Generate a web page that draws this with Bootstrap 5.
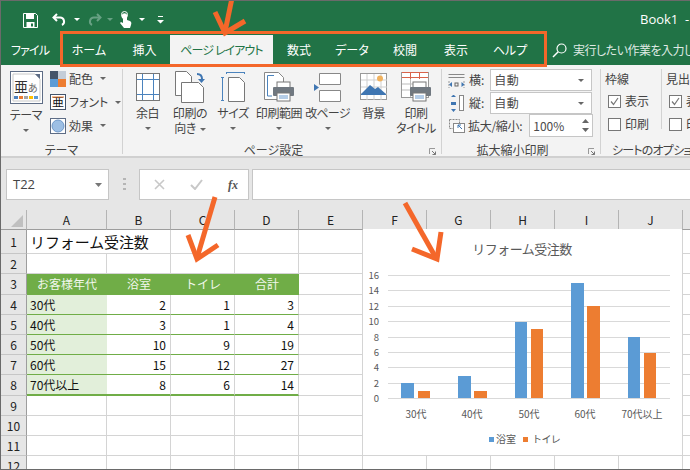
<!DOCTYPE html>
<html lang="ja">
<head>
<meta charset="utf-8">
<title>Book1 - Excel</title>
<link rel="stylesheet" href="https://cdn.jsdelivr.net/npm/bootstrap@5.3.0/dist/css/bootstrap.min.css">
<style>
html,body{margin:0;background:#fff;overflow:hidden}
body{font-family:"Noto Sans CJK JP","Liberation Sans",sans-serif;font-size:12px;color:#444}
svg{display:block;flex:none}
.app{position:relative;width:690px;height:470px;overflow:hidden;border-top:1px solid #6a6a6a;border-left:1px solid #6a6a6a;border-bottom:1px solid #6a6a6a}
.titlebar{height:34px;background:#217346;color:#fff;position:relative}
.qat{padding-left:22px;padding-top:10px}
.undo-gap{margin-left:14px}
.caret-gap{margin-left:8px}
.redo-gap{margin-left:8px}
.dim-caret-gap{margin-left:5px}
.touch-gap{margin-left:6px}
.touch-caret-gap{margin-left:7px}
.more-gap{margin-left:12px}
.doc-title{position:absolute;left:639px;top:9px;font-family:"Open Sans","Liberation Sans",sans-serif;font-size:13px;white-space:nowrap}
.tabsbar{height:30px;background:#217346;color:#fff;width:760px}
.xtab{flex:none;height:30px;font-size:12px;font-feature-settings:"palt";line-height:30px;text-align:center;white-space:nowrap}
.xtab-file{letter-spacing:-.8px}
.xtab-on{background:#f3f3f3;color:#217346;letter-spacing:-.9px}
.searchhint{flex:none;margin-left:13px;gap:6px;font-size:12px;font-feature-settings:"palt";letter-spacing:-.5px;color:#dfe9e3;white-space:nowrap}
.ribbon{height:93px;background:#f3f3f3;border-bottom:2px solid #d0d0d0}
.rgroup{position:relative;border-right:1px solid #d2d2d2;margin-top:4px;height:85px;flex:none}
.rcap{position:absolute;left:0;right:0;top:74px;text-align:center;font-size:12px;font-feature-settings:"palt";line-height:14px;white-space:nowrap}
.cap-offset{right:17px}
.launch{position:absolute;right:5px;top:79px}
.bigbtn{width:43px;flex:none;text-align:center;font-size:12px;font-feature-settings:"palt";letter-spacing:-.4px;line-height:15px;white-space:nowrap}
.btn-theme{width:50px}
.btn-w42{width:42px}
.btn-w44{width:44px}
.btn-w48{width:48px}
.btn-w49{width:49px;letter-spacing:-.7px}
.theme-icon{height:37px;padding:2px 0 0 1px}
.theme-label{margin-top:1px}
.caret-line{line-height:14px}
.bigicon{height:36px;display:flex;justify-content:center;align-items:center}
.down{width:0;height:0;border-left:3px solid transparent;border-right:3px solid transparent;border-top:3px solid #666;display:inline-block;vertical-align:middle}
.tiny{font-size:12px;font-feature-settings:"palt";line-height:16px;white-space:nowrap;gap:3px}
.srows{margin-top:-2px;margin-left:-1px}
.srow{height:23.5px}
.grp-page{width:319px;padding-left:3px}
.grp-scale{width:159px;padding-left:6px}
.grp-sheet{width:89px;border-right:0;padding-left:4px}
.grp-theme{width:122px}
.frow{height:22px}
.frow-2{margin-top:1px}
.frow-3{height:23px}
.fieldlabel{margin-left:3px;font-size:12px;white-space:nowrap}
.fieldlabel-tight{letter-spacing:-.3px}
.dropbox{background:#fff;border:1px solid #c6c6c6;height:22px;width:102px;margin-left:6px;padding:0 3px;color:#4b4b4b;font-size:12px;letter-spacing:.5px}
.spinbox{background:#fff;border:1px solid #c6c6c6;height:23px;width:64px;margin-left:7px;padding:0 3px;font-size:12px;color:#4b4b4b}
.opt-col{flex:none}
.opt-first{width:57px;border-right:1px solid #d2d2d2;height:60px}
.opt-second{padding-left:4px}
.opt-head{height:20px;line-height:20px}
.opt-row{height:23px;padding:1px 0 0 3px}
.cap-left{text-align:left;left:11px;letter-spacing:-.8px}
.tick{width:13px;height:13px;background:#fff;border:1px solid #777;flex:none}
.formula{height:52px;background:#e6e6e6;padding:11px 0 0 5px}
.fbox{height:31px;background:#fff;border:1px solid #c6c6c6}
.namebox{width:103px;padding:0 6px;font-family:"Open Sans","Liberation Sans",sans-serif;font-size:13px;color:#444}
.fdots{width:30px;height:30px}
.fxbox{width:110px;padding:0 10px 0 14px}
.fxmark{font-family:"Liberation Serif",serif;font-style:italic;font-weight:700;font-size:12px;color:#555}
.fxinput{flex:1 1 auto;margin-left:3px;border-right:0}
.sheet{border-collapse:separate;border-spacing:0;table-layout:fixed;width:698px;background:#fff;font-size:12px;color:#111}
.sheet th{background:#e6e6e6;font-weight:400;text-align:center;padding:0;color:#222;font-size:12px;line-height:14px;border-bottom:1px solid #9d9d9d;border-right:1px solid #b4b4b4}
.sheet td{padding:0 3px;border-right:1px solid #d4d4d4;border-bottom:1px solid #d4d4d4;line-height:14px;white-space:nowrap;overflow:hidden}
.sheet tbody th{border-bottom:1px solid #c6c6c6;border-right:1px solid #9d9d9d}
.c-head{width:26px}.c-a{width:80px}.c-n{width:64px}.c-end{width:16px}
.r-20{height:20px}.r-21{height:21px}.r-24{height:24px}
.sheet td.hdr{background:#70ad47;color:#f1f7ed;text-align:center;border-right:0;border-bottom-color:#70ad47}
.sheet td.lbl{background:#e2efda;border-right:0;border-bottom-color:#70ad47}
.sheet td.num{text-align:right;padding-right:4px;border-bottom-color:#70ad47}
.sheet tr.last td.lbl,.sheet tr.last td.num{border-bottom:2px solid #70ad47}
.sheet td.ttl{font-size:15px;border-right:0;overflow:visible;letter-spacing:-.1px}
.corner-mark{margin:3px 0 0 10px}
.chartbox{position:absolute;left:362px;top:228px}
.overlay{position:absolute;left:-1px;top:-1px;pointer-events:none}
</style>
</head>
<body>
<div class="app">
  <div class="titlebar">
    <div class="qat d-flex align-items-center">
      <svg width="15" height="15" viewBox="0 0 15 15"><path d="M.5.5h12l2 2v12H.5z" fill="none" stroke="#fff"/><path d="M3 1h8v5H3zM3.500 9h8v5h-8z" fill="#fff"/><rect x="8" y="10.500" width="2" height="3" fill="#217346"/></svg>
      <svg class="undo-gap" width="14" height="14" viewBox="0 0 14 14"><path d="M5 1L1.500 4.500 5 8" fill="none" stroke="#fff" stroke-width="2"/><path d="M2 4.500h6a4 4 0 0 1 2 7.500" fill="none" stroke="#fff" stroke-width="2"/></svg>
      <span class="caret-gap"><svg width="6" height="4"><path d="M0 0h6L3 3z" fill="#fff"/></svg></span>
      <svg class="redo-gap" width="14" height="14" viewBox="0 0 14 14"><path d="M9 1l3.500 3.500L9 8" fill="none" stroke="#68a184" stroke-width="2"/><path d="M12 4.500H6a4 4 0 0 0-2 7.500" fill="none" stroke="#68a184" stroke-width="2"/></svg>
      <span class="dim-caret-gap"><svg width="6" height="4"><path d="M0 0h6L3 3z" fill="#68a184"/></svg></span>
      <svg class="touch-gap" width="13" height="18" viewBox="0 0 13 18"><path d="M3 7a3 3 0 1 1 5 0l0 2 3 1q2 1 1 4l-1 3H5L1 12l1-1 2 1V5h3v5" fill="#fff"/><circle cx="5.500" cy="3.500" r="3" fill="none" stroke="#fff"/></svg>
      <span class="touch-caret-gap"><svg width="6" height="4"><path d="M0 0h6L3 3z" fill="#fff"/></svg></span>
      <svg class="more-gap" width="7" height="8" viewBox="0 0 7 8"><path d="M1 0h5v1H1zM0 4h7L3.500 7.500z" fill="#fff"/></svg>
    </div>
    <div class="doc-title">Book1 &nbsp;-</div>
  </div>

  <div class="tabsbar d-flex align-items-center">
    <div class="xtab xtab-file" style="width:58px">ファイル</div>
    <div class="xtab" style="width:60px">ホーム</div>
    <div class="xtab" style="width:51px">挿入</div>
    <div class="xtab xtab-on" style="width:103px">ページ レイアウト</div>
    <div class="xtab" style="width:52px">数式</div>
    <div class="xtab" style="width:54px">データ</div>
    <div class="xtab" style="width:52px">校閲</div>
    <div class="xtab" style="width:50px">表示</div>
    <div class="xtab" style="width:58px">ヘルプ</div>
    <div class="searchhint d-flex align-items-center">
      <svg width="15" height="15" viewBox="0 0 15 15"><circle cx="9.500" cy="5.500" r="4.500" fill="none" stroke="#fff" stroke-width="1.200"/><path d="M6.200 8.800L1 14" stroke="#fff" stroke-width="1.500"/></svg>
      <span>実行したい作業を入力してください</span>
    </div>
  </div>

  <div class="ribbon d-flex align-items-start">
    <div class="rgroup grp-theme">
      <div class="d-flex">
        <div class="bigbtn btn-theme">
          <div class="theme-icon d-flex justify-content-center">
            <svg width="33" height="33" viewBox="0 0 33 33"><rect x=".5" y=".5" width="32" height="32" fill="#fff" stroke="#5d6c85"/><path d="M3 3h22l5 5v22H3z" fill="#fff" stroke="#c8c8c8"/><path d="M25 3h5v5z" fill="#5d6c85"/><text x="4" y="21" font-size="14" fill="#333" font-family="Noto Sans CJK JP">亜</text><text x="18" y="21" font-size="10" fill="#666" font-family="Noto Sans CJK JP">あ</text><rect x="4" y="25" width="4" height="3" fill="#4f81bd"/><rect x="9" y="25" width="4" height="3" fill="#ed7d31"/><rect x="14" y="25" width="4" height="3" fill="#a5a5a5"/><rect x="19" y="25" width="4" height="3" fill="#ffc000"/><rect x="24" y="25" width="4" height="3" fill="#5b9bd5"/></svg>
          </div>
          <div class="theme-label">テーマ</div>
          <div class="caret-line"><span class="down"></span></div>
        </div>
        <div class="srows">
          <div class="d-flex align-items-center tiny srow"><svg width="16" height="16" viewBox="0 0 16 16"><rect width="8" height="8" fill="#44546a"/><rect x="8" width="8" height="8" fill="#c4cdd8"/><rect y="8" width="8" height="8" fill="#5b9bd5"/><rect x="8" y="8" width="8" height="8" fill="#ed7d31"/></svg><span>配色</span><span class="down ms-1"></span></div>
          <div class="d-flex align-items-center tiny srow"><svg width="16" height="16" viewBox="0 0 16 16"><rect x=".5" y=".5" width="15" height="15" fill="#fff" stroke="#44546a"/><text x="2" y="13" font-size="12" fill="#111" font-family="Noto Sans CJK JP">亜</text><path d="M2 3h12" stroke="#ed7d31"/></svg><span>フォント</span><span class="down ms-1"></span></div>
          <div class="d-flex align-items-center tiny srow"><svg width="16" height="16" viewBox="0 0 16 16"><rect x=".5" y=".5" width="15" height="15" fill="#fff" stroke="#5d6c85"/><circle cx="8" cy="8" r="6" fill="#9dbfe4" stroke="#6d97c8"/></svg><span>効果</span><span class="down ms-1"></span></div>
        </div>
      </div>
      <div class="rcap">テーマ</div>
    </div>

    <div class="rgroup grp-page d-flex">
      <div class="bigbtn">
        <div class="bigicon"><svg width="24" height="28" viewBox="0 0 24 28"><rect x=".5" y=".5" width="23" height="27" fill="#fff" stroke="#777"/><path d="M6.500 1v26M17.500 1v26M1 6.500h22M1 21.500h22" stroke="#4b83bd" fill="none"/></svg></div>
        <div>余白</div>
        <div class="caret-line"><span class="down"></span></div>
      </div>
      <div class="bigbtn btn-w42">
        <div class="bigicon"><svg width="30" height="32" viewBox="0 0 30 32"><path d="M.5.500h11l5 5v19H.5z" fill="#fff" stroke="#777"/><path d="M6.500 11.500h17l5 5v15h-22z" fill="#fff" stroke="#777"/><path d="M22 3q5 0 5 5" fill="none" stroke="#3f76b2" stroke-width="2"/><path d="M23 8h7l-3.500 4z" fill="#3f76b2"/></svg></div>
        <div>印刷の</div>
        <div>向き<span class="down ms-1"></span></div>
      </div>
      <div class="bigbtn btn-w44">
        <div class="bigicon"><svg width="24" height="30" viewBox="0 0 24 30"><path d="M5 .500h19M5.500 0v2M23.500 0v2" stroke="#4b83bd" fill="none"/><path d="M7.500 5.500h11l5 5v19h-16z" fill="#fff" stroke="#777"/><path d="M1.500 5v24M0 5.500h3M0 28.500h3" stroke="#4b83bd" fill="none"/></svg></div>
        <div>サイズ</div>
        <div class="caret-line"><span class="down"></span></div>
      </div>
      <div class="bigbtn btn-w48">
        <div class="bigicon"><svg width="31" height="30" viewBox="0 0 31 30"><path d="M.5.500h14l5 5v22H.5z" fill="#fff" stroke="#888"/><path d="M10 3.500H3.500V24H8" fill="none" stroke="#4b83bd"/><rect x="13" y="10" width="13" height="7" fill="#fff" stroke="#777"/><rect x="9" y="15" width="21" height="9" rx="1" fill="#707880"/><rect x="13" y="21" width="13" height="8" fill="#fff" stroke="#777"/><path d="M15 24h9M15 26h9" stroke="#6b9bd0"/></svg></div>
        <div>印刷範囲</div>
        <div class="caret-line"><span class="down"></span></div>
      </div>
      <div class="bigbtn btn-w49">
        <div class="bigicon"><svg width="27" height="29" viewBox="0 0 27 29"><path d="M5.500.500h21v11h-21zM5.500 17.500h21v11h-21z" fill="#fff" stroke="#888"/><path d="M0 11l5 3.500-5 3.500z" fill="#3f76b2"/></svg></div>
        <div>改ページ</div>
        <div class="caret-line"><span class="down"></span></div>
      </div>
      <div class="bigbtn">
        <div class="bigicon"><svg width="27" height="28" viewBox="0 0 27 28"><rect x=".5" y=".5" width="26" height="26" fill="#fff" stroke="#999"/><path d="M7 1v26M14 1v26M21 1v26M1 7h26M1 14h26M1 21h26" stroke="#cfcfcf"/><circle cx="20" cy="5.500" r="3" fill="#f0b25f"/><path d="M1 21l9-9 5 4 3-2 8 7v1H1z" fill="#3f76b2"/></svg></div>
        <div>背景</div>
      </div>
      <div class="bigbtn btn-w42">
        <div class="bigicon"><svg width="30" height="30" viewBox="0 0 30 30"><rect x=".5" y=".5" width="27" height="25" fill="#fff" stroke="#999"/><path d="M1 .5h26M1 5.500h26M9.500 1v6M18.500 1v6" stroke="#d9634a" fill="none"/><path d="M1 12h12M1 18h10M9.500 7v18" stroke="#bbb"/><rect x="12" y="10" width="13" height="7" fill="#fff" stroke="#777"/><rect x="9" y="15" width="21" height="9" rx="1" fill="#707880"/><rect x="12" y="21" width="13" height="8" fill="#fff" stroke="#777"/><path d="M14 24h9M14 26h9" stroke="#6b9bd0"/></svg></div>
        <div>印刷</div>
        <div>タイトル</div>
      </div>
      <div class="rcap cap-offset">ページ設定</div>
      <svg class="launch" width="7" height="7" viewBox="0 0 7 7"><path d="M.5 6V.5H6" fill="none" stroke="#999"/><path d="M3 3l3.500 3.500M6.500 3.500v3h-3" fill="none" stroke="#777"/></svg>
    </div>

    <div class="rgroup grp-scale">
      <div class="d-flex align-items-center frow">
        <svg width="18" height="17" viewBox="0 0 18 17"><path d="M.5 2.500h16M.5 5.500h16" stroke="#888" fill="none"/><path d="M1 9v7M16 9v7" stroke="#999" stroke-dasharray="2 1"/><path d="M1 12.500l3-2.500v5zM16.500 12.500l-3-2.500v5z" fill="#3f76b2"/><rect x="7" y="11" width="3" height="3" fill="none" stroke="#666"/></svg>
        <span class="fieldlabel">横:</span>
        <div class="dropbox d-flex align-items-center justify-content-between">自動<span class="down me-1"></span></div>
      </div>
      <div class="d-flex align-items-center frow frow-2">
        <svg width="18" height="17" viewBox="0 0 18 17"><rect x="11.500" y=".5" width="4" height="15" fill="#fff" stroke="#888"/><path d="M3 2l2.500-2.500L8 2zM3 14l2.500 3L8 14zM3 7h5v3H3z" fill="#3f76b2"/></svg>
        <span class="fieldlabel">縦:</span>
        <div class="dropbox d-flex align-items-center justify-content-between">自動<span class="down me-1"></span></div>
      </div>
      <div class="d-flex align-items-center frow-3">
        <svg width="17" height="15" viewBox="0 0 17 15"><rect x="1.500" y="1.500" width="10" height="9" fill="none" stroke="#888" stroke-dasharray="2 1"/><rect x="5.500" y="5.500" width="11" height="9" fill="#fff" stroke="#888"/><path d="M10 7l4 4M10 7h3M10 7v3" stroke="#3f76b2" fill="none"/></svg>
        <span class="fieldlabel fieldlabel-tight">拡大/縮小:</span>
        <div class="spinbox d-flex align-items-center justify-content-between">100%
          <svg width="7" height="15" viewBox="0 0 7 15"><path d="M0 5l3.500-4L7 5zM0 10l3.500 4L7 10z" fill="#666"/></svg>
        </div>
      </div>
      <div class="rcap cap-offset">拡大縮小印刷</div>
      <svg class="launch" width="7" height="7" viewBox="0 0 7 7"><path d="M.5 6V.5H6" fill="none" stroke="#999"/><path d="M3 3l3.500 3.500M6.500 3.500v3h-3" fill="none" stroke="#777"/></svg>
    </div>

    <div class="rgroup grp-sheet d-flex">
      <div class="opt-col opt-first">
        <div class="tiny opt-head">枠線</div>
        <div class="d-flex align-items-center gap-1 tiny opt-row"><div class="tick"><svg width="11" height="11" viewBox="0 0 11 11"><path d="M2 5.500l2.500 3L9 2" fill="none" stroke="#777" stroke-width="1.200"/></svg></div>表示</div>
        <div class="d-flex align-items-center gap-1 tiny opt-row"><div class="tick"></div>印刷</div>
      </div>
      <div class="opt-col opt-second">
        <div class="tiny opt-head">見出し</div>
        <div class="d-flex align-items-center gap-1 tiny opt-row"><div class="tick"><svg width="11" height="11" viewBox="0 0 11 11"><path d="M2 5.500l2.500 3L9 2" fill="none" stroke="#777" stroke-width="1.200"/></svg></div>表示</div>
        <div class="d-flex align-items-center gap-1 tiny opt-row"><div class="tick"></div>印刷</div>
      </div>
      <div class="rcap cap-left">シートのオプション</div>
    </div>
  </div>

  <div class="formula d-flex align-items-start">
    <div class="fbox namebox d-flex align-items-center justify-content-between">T22<svg width="7" height="4"><path d="M0 0h7L3.500 4z" fill="#777"/></svg></div>
    <div class="fdots d-flex justify-content-center align-items-center"><svg width="3" height="12" viewBox="0 0 3 12"><path d="M0 0h3v2H0zM0 5h3v2H0zM0 10h3v2H0z" fill="#b5b5b5"/></svg></div>
    <div class="fbox fxbox d-flex align-items-center justify-content-between">
      <svg width="11" height="11" viewBox="0 0 11 11"><path d="M1 1l9 9M10 1l-9 9" stroke="#c8c8c8" stroke-width="1.600"/></svg>
      <svg width="13" height="11" viewBox="0 0 13 11"><path d="M1 6l4 4 7-9" fill="none" stroke="#c8c8c8" stroke-width="2"/></svg>
      <span class="fxmark">fx</span>
    </div>
    <div class="fbox fxinput"></div>
  </div>

  <table class="sheet">
    <colgroup><col class="c-head"><col class="c-a"><col class="c-n"><col class="c-n"><col class="c-n"><col class="c-n"><col class="c-n"><col class="c-n"><col class="c-n"><col class="c-n"><col class="c-n"><col class="c-end"></colgroup>
    <thead>
      <tr class="r-20">
        <th><svg class="corner-mark" width="12" height="12" viewBox="0 0 12 12"><path d="M12 0v12H0z" fill="#c0c0c0"/></svg></th>
        <th>A</th><th>B</th><th>C</th><th>D</th><th>E</th><th>F</th><th>G</th><th>H</th><th>I</th><th>J</th><th></th>
      </tr>
    </thead>
    <tbody>
      <tr class="r-24"><th>1</th><td class="ttl">リフォーム受注数</td><td></td><td></td><td></td><td></td><td></td><td></td><td></td><td></td><td></td><td></td></tr>
      <tr class="r-20"><th>2</th><td></td><td></td><td></td><td></td><td></td><td></td><td></td><td></td><td></td><td></td><td></td></tr>
      <tr class="r-21"><th>3</th><td class="hdr">お客様年代</td><td class="hdr">浴室</td><td class="hdr">トイレ</td><td class="hdr">合計</td><td></td><td></td><td></td><td></td><td></td><td></td><td></td></tr>
      <tr class="r-20"><th>4</th><td class="lbl">30代</td><td class="num">2</td><td class="num">1</td><td class="num">3</td><td></td><td></td><td></td><td></td><td></td><td></td><td></td></tr>
      <tr class="r-20"><th>5</th><td class="lbl">40代</td><td class="num">3</td><td class="num">1</td><td class="num">4</td><td></td><td></td><td></td><td></td><td></td><td></td><td></td></tr>
      <tr class="r-20"><th>6</th><td class="lbl">50代</td><td class="num">10</td><td class="num">9</td><td class="num">19</td><td></td><td></td><td></td><td></td><td></td><td></td><td></td></tr>
      <tr class="r-20"><th>7</th><td class="lbl">60代</td><td class="num">15</td><td class="num">12</td><td class="num">27</td><td></td><td></td><td></td><td></td><td></td><td></td><td></td></tr>
      <tr class="last r-21"><th>8</th><td class="lbl">70代以上</td><td class="num">8</td><td class="num">6</td><td class="num">14</td><td></td><td></td><td></td><td></td><td></td><td></td><td></td></tr>
      <tr class="r-20"><th>9</th><td></td><td></td><td></td><td></td><td></td><td></td><td></td><td></td><td></td><td></td><td></td></tr>
      <tr class="r-20"><th>10</th><td></td><td></td><td></td><td></td><td></td><td></td><td></td><td></td><td></td><td></td><td></td></tr>
      <tr class="r-20"><th>11</th><td></td><td></td><td></td><td></td><td></td><td></td><td></td><td></td><td></td><td></td><td></td></tr>
      <tr class="r-20"><th>12</th><td></td><td></td><td></td><td></td><td></td><td></td><td></td><td></td><td></td><td></td><td></td></tr>
    </tbody>
  </table>

  <svg class="chartbox" width="319" height="226" viewBox="363 229 319 226" font-family="Noto Sans CJK JP" fill="#595959">
    <rect x="363" y="229" width="319" height="226" fill="#fff"/>
    <text x="522" y="254" text-anchor="middle" font-size="13" letter-spacing="-.5">リフォーム受注数</text>
    <g stroke="#d9d9d9"><path d="M388 275.500h282M388 290.500h282M388 306.500h282M388 321.500h282M388 337.500h282M388 352.500h282M388 367.500h282M388 383.500h282M388 398.500h282"/></g>
    <g font-size="9.500" text-anchor="end">
      <text x="379" y="279">16</text><text x="379" y="294">14</text><text x="379" y="310">12</text><text x="379" y="325">10</text><text x="379" y="341">8</text><text x="379" y="356">6</text><text x="379" y="371">4</text><text x="379" y="387">2</text><text x="379" y="402">0</text>
    </g>
    <g fill="#5b9bd5"><rect x="401" y="383" width="13" height="15"/><rect x="458" y="376" width="13" height="22"/><rect x="515" y="322" width="12" height="76"/><rect x="571" y="283" width="13" height="115"/><rect x="628" y="337" width="12" height="61"/></g>
    <g fill="#ed7d31"><rect x="418" y="391" width="12" height="7"/><rect x="474" y="391" width="13" height="7"/><rect x="531" y="329" width="12" height="69"/><rect x="587" y="306" width="13" height="92"/><rect x="644" y="353" width="12" height="45"/></g>
    <g font-size="10" text-anchor="middle">
      <text x="416" y="418">30代</text><text x="472" y="418">40代</text><text x="529" y="418">50代</text><text x="585" y="418">60代</text><text x="642" y="418">70代以上</text>
    </g>
    <rect x="489" y="437" width="5" height="5" fill="#5b9bd5"/><text x="496" y="443" font-size="10">浴室</text>
    <rect x="523" y="437" width="5" height="5" fill="#ed7d31"/><text x="532" y="443" font-size="10" letter-spacing="-.6">トイレ</text>
  </svg>

  <svg class="overlay" width="690" height="470" viewBox="0 0 690 470" fill="none" stroke="#f4672a">
    <rect x="61.500" y="32.500" width="484" height="33" stroke-width="3"/>
    <g stroke-width="5">
      <path d="M232 -2L225 32"/><path d="M215 12L225 33 245 21"/>
      <path d="M215 197L197 258"/><path d="M188 235L197 259 218 245"/>
      <path d="M405 203L436 258"/><path d="M412 249L437 259 441 232"/>
    </g>
  </svg>
</div>
</body>
</html>
